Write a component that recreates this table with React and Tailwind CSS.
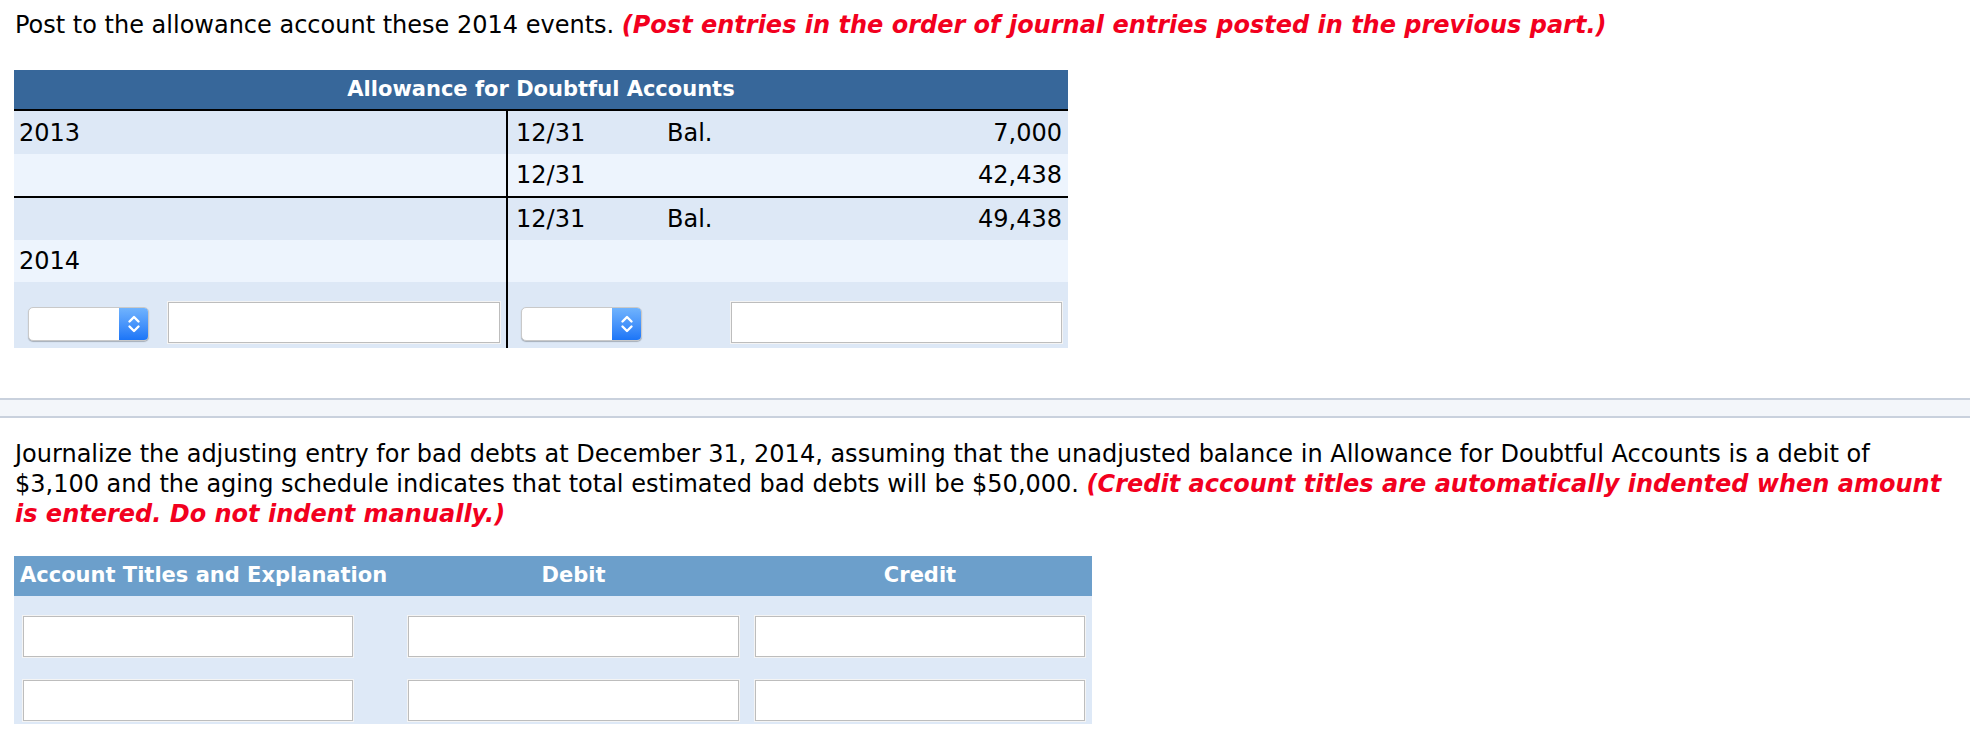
import React from "react";

const FONT = { fontFamily: "'DejaVu Sans', Verdana, sans-serif" };
const HFONT = { fontFamily: "'DejaVu Sans', Tahoma, sans-serif" };

function MacSelect() {
  return (
    <div className="flex h-[34px] w-[121px] overflow-hidden rounded-[5px] border border-[#c9c9c9] bg-white shadow-[0_1px_1px_rgba(0,0,0,0.25)]">
      <div className="flex-1" />
      <div className="flex w-[29px] items-center justify-center bg-linear-to-b from-[#70b3fd] to-[#1b75f7]">
        <svg width="14" height="22" viewBox="0 0 14 22">
          <path d="M2.5 8.5 L7 4 L11.5 8.5 M2.5 13.5 L7 18 L11.5 13.5" stroke="white" strokeWidth="2.4" fill="none" strokeLinecap="round" strokeLinejoin="round" />
        </svg>
      </div>
    </div>
  );
}

function TextBox({ w }) {
  return <div className={`h-[41px] ${w} border border-[#bdbdbd] bg-white shadow-[0_0_0_1px_#f4f4f4]`} />;
}

function TRow({ left, date, bal, amt, bg, h, border }) {
  return (
    <div className={`flex ${h} ${bg} ${border ? "border-b-2 border-black" : ""}`}>
      <div className="flex w-[494px] items-center border-r-2 border-black pl-[5px]">{left}</div>
      <div className="flex flex-1 items-center pl-[8px] pr-[6px]">
        <div className="w-[151px]">{date}</div>
        <div className="flex-1">{bal}</div>
        <div className="text-right">{amt}</div>
      </div>
    </div>
  );
}

export default function App() {
  return (
    <div className="min-h-[748px] bg-white text-[24px] text-black" style={FONT}>
      <div className="px-[14px] pt-[10px]">
        <p className="leading-[30px] pl-[1px]">
          Post to the allowance account these 2014 events.{" "}
          <span className="font-bold italic text-[#f2001e]">(Post entries in the order of journal entries posted in the previous part.)</span>
        </p>

        <div className="mt-[30px] w-[1054px]">
          <div className="flex h-[41px] items-center justify-center border-b-2 border-black bg-[#37679a] text-[21px] font-bold text-white" style={HFONT}>
            Allowance for Doubtful Accounts
          </div>
          <TRow left="2013" date="12/31" bal="Bal." amt="7,000" bg="bg-[#dde8f6]" h="h-[43px]" />
          <TRow left="" date="12/31" bal="" amt="42,438" bg="bg-[#edf4fd]" h="h-[44px]" border />
          <TRow left="" date="12/31" bal="Bal." amt="49,438" bg="bg-[#dde8f6]" h="h-[42px]" />
          <TRow left="2014" date="" bal="" amt="" bg="bg-[#edf4fd]" h="h-[42px]" />
          <div className="flex h-[66px] bg-[#dde8f6]">
            <div className="flex w-[494px] items-end gap-[19px] border-r-2 border-black pb-[5px] pl-[14px]">
              <div className="mb-[2px]"><MacSelect /></div>
              <TextBox w="w-[332px]" />
            </div>
            <div className="flex flex-1 items-end pb-[5px] pl-[13px]">
              <div className="mb-[2px]"><MacSelect /></div>
              <div className="ml-[89px]"><TextBox w="w-[331px]" /></div>
            </div>
          </div>
        </div>
      </div>

      <div className="mt-[50px] h-[20px] border-y-2 border-[#c9d1dd] bg-[#f3f6fa]" />

      <div className="px-[14px]">
        <p className="mt-[21px] pl-[1px] leading-[30px]">
          Journalize the adjusting entry for bad debts at December 31, 2014, assuming that the unadjusted balance in Allowance for Doubtful Accounts is a debit of
          <br />
          $3,100 and the aging schedule indicates that total estimated bad debts will be $50,000.{" "}
          <span className="font-bold italic text-[#f2001e]">
            (Credit account titles are automatically indented when amount
            <br />
            is entered. Do not indent manually.)
          </span>
        </p>

        <div className="mt-[27px] w-[1078px]">
          <div className="flex h-[40px] items-center bg-[#6c9fcb] pl-[6px] text-[21px] font-bold text-white" style={HFONT}>
            <div className="w-[388px]">Account Titles and Explanation</div>
            <div className="w-[331px] text-center">Debit</div>
            <div className="w-[16px]" />
            <div className="w-[330px] text-center">Credit</div>
          </div>
          <div className="flex flex-col gap-[23px] bg-[#dee9f7] pb-[3px] pl-[9px] pt-[20px]">
            {[0, 1].map((i) => (
              <div key={i} className="flex">
                <TextBox w="w-[330px]" />
                <div className="ml-[55px]"><TextBox w="w-[331px]" /></div>
                <div className="ml-[16px]"><TextBox w="w-[330px]" /></div>
              </div>
            ))}
          </div>
        </div>
      </div>
    </div>
  );
}
